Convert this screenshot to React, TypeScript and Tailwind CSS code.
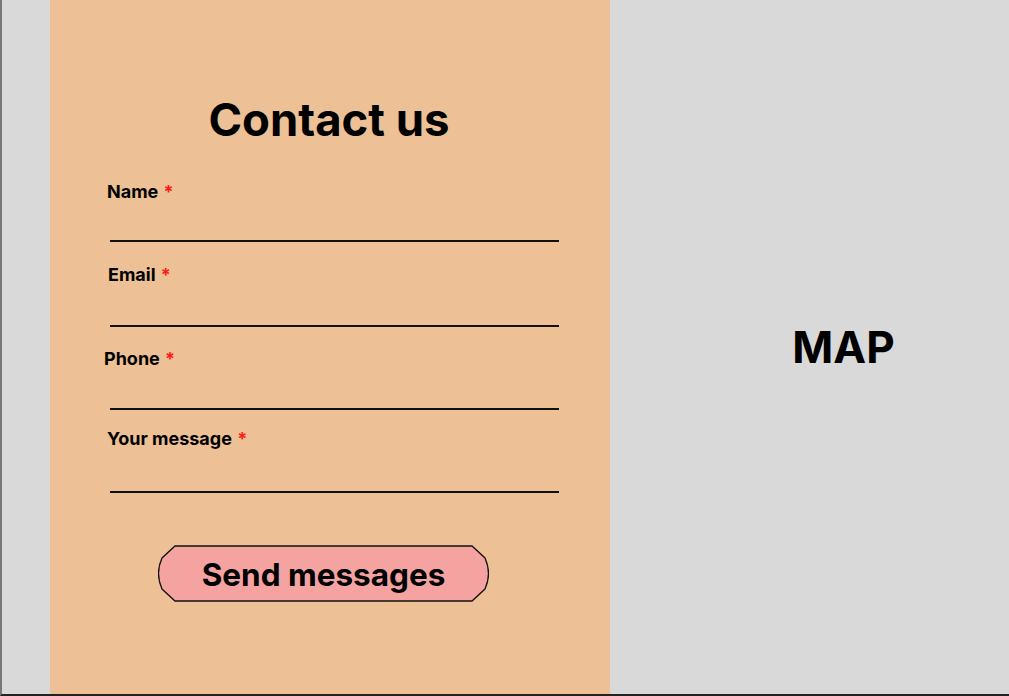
const fields = [
  { label: "Name", labelMl: "ml-[57px]", mt: "mt-[36px]", gap: "mt-[38px]" },
  { label: "Email", labelMl: "ml-[58px]", mt: "mt-[23px]", gap: "mt-[40px]" },
  { label: "Phone", labelMl: "ml-[54px]", mt: "mt-[22px]", gap: "mt-[39px]" },
  { label: "Your message", labelMl: "ml-[57px]", mt: "mt-[19px]", gap: "mt-[42px]" },
];

function SendButton() {
  return (
    <button className="relative ml-[108px] mt-[52px] h-[57px] w-[331px] pt-[4px]">
      <svg
        className="absolute inset-0"
        width="331"
        height="57"
        viewBox="0 0 331 57"
        fill="none"
      >
        <path
          d="M17 1 L314 1 L327 13 Q334 28.5 327 44 L314 56 L17 56 L4 44 Q-3 28.5 4 13 Z"
          fill="#f4a3a0"
          stroke="#111"
          strokeWidth="1.3"
        />
      </svg>
      <span className="relative text-[31.5px] font-bold text-black leading-none">
        Send messages
      </span>
    </button>
  );
}

export default function App() {
  return (
    <main
      className="flex h-[696px] w-full border-l-2 border-b-2 border-l-[#777] border-b-[#222] bg-[#d9d9d9]"
      style={{ fontFamily: "Inter, 'Liberation Sans', sans-serif" }}
    >
      <div className="w-[48px] shrink-0" />

      {/* Contact form */}
      <section className="flex w-[560px] shrink-0 flex-col bg-[#eec095]">
        <h1 className="mt-[94px] -ml-[2px] text-center text-[45.5px] font-bold leading-[52px] text-black">
          Contact us
        </h1>

        {fields.map((f) => (
          <div key={f.label} className={f.mt}>
            <label className={`${f.labelMl} block text-[18px] font-bold leading-5 text-black`}>
              {f.label} <span className="ml-[1px] text-[#ff1a1a]">*</span>
            </label>
            <div className={`${f.gap} ml-[60px] h-[2px] w-[449px] bg-[#111]`} />
          </div>
        ))}

        <SendButton />
      </section>

      {/* Map placeholder */}
      <section className="flex flex-1 items-center justify-center pl-[68px]">
        <span className="text-[44px] font-bold leading-none text-black">MAP</span>
      </section>
    </main>
  );
}
